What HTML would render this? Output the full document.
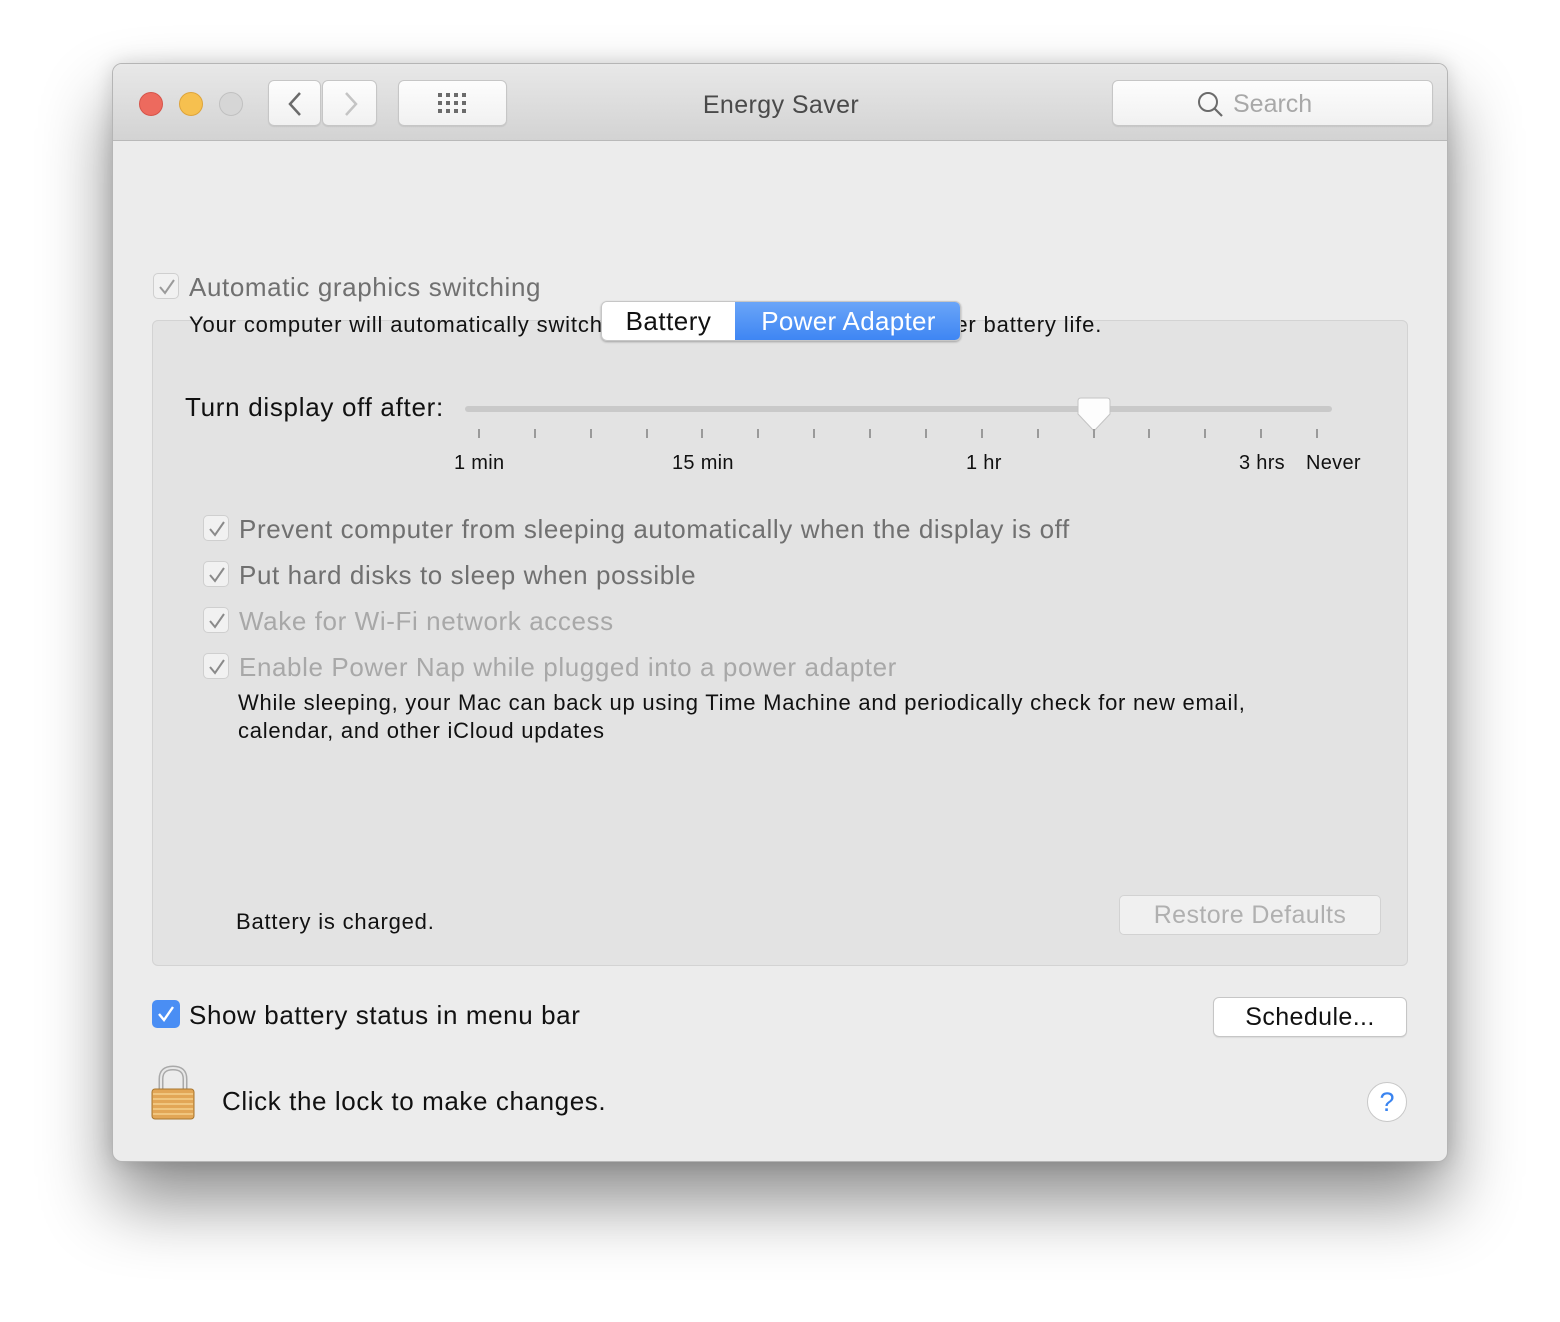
<!DOCTYPE html>
<html><head><meta charset="utf-8"><style>
*{margin:0;padding:0;box-sizing:border-box}
body{width:1560px;height:1322px;background:#fff;font-family:"Liberation Sans",sans-serif;position:relative;overflow:hidden}
.a{position:absolute}
#win{left:112px;top:63px;width:1336px;height:1099px;background:#ececec;border-radius:10px;border:1px solid #b5b5b5;box-shadow:0 40px 70px rgba(0,0,0,0.45),0 0 20px rgba(0,0,0,0.15);overflow:hidden}
#tb{left:0;top:0;width:1336px;height:77px;background:linear-gradient(#e8e8e8,#d3d3d3);border-bottom:1px solid #b9b9b9}
.dot{width:24px;height:24px;border-radius:50%;top:28px}
.btn{background:linear-gradient(#fdfdfd,#f1f1f1);border:1px solid #c6c6c6;border-radius:6px;box-shadow:0 1px 1px rgba(0,0,0,.08)}
.cb{width:26px;height:26px;border:1px solid #cfcfcf;border-radius:5px;background:#f1f1f1}
.cb svg{position:absolute;left:4px;top:4px}
.t{font-size:26px;white-space:nowrap;letter-spacing:0.6px}
.g1{color:#707070}.g2{color:#a8a8a8}
.tick{width:2px;height:9px;background:#9a9a9a;top:429px}
.lbl{font-size:20px;color:#111;top:452px;letter-spacing:0.3px}
</style></head><body>
<div id="win" class="a">
<div id="tb" class="a">
 <div class="a dot" style="left:26px;background:#ed6a5e;border:1px solid #d6544a"></div>
 <div class="a dot" style="left:66px;background:#f6c04f;border:1px solid #dea43a"></div>
 <div class="a dot" style="left:106px;background:#d6d6d6;border:1px solid #c0c0c0"></div>
 <div class="a btn" style="left:155px;top:16px;width:53px;height:46px"><svg class="a" style="left:16px;top:10px" width="20" height="26"><path d="M15 2 L5 13 L15 24" stroke="#6b6b6b" stroke-width="2.5" fill="none"/></svg></div>
 <div class="a btn" style="left:209px;top:16px;width:55px;height:46px"><svg class="a" style="left:18px;top:10px" width="20" height="26"><path d="M5 2 L15 13 L5 24" stroke="#c4c4c4" stroke-width="2.5" fill="none"/></svg></div>
 <div class="a btn" style="left:285px;top:16px;width:109px;height:46px"><svg class="a" style="left:39px;top:12px" width="32" height="22" fill="#6b6b6b"><rect x="0" y="0" width="4" height="4"/><rect x="8" y="0" width="4" height="4"/><rect x="16" y="0" width="4" height="4"/><rect x="24" y="0" width="4" height="4"/><rect x="0" y="8" width="4" height="4"/><rect x="8" y="8" width="4" height="4"/><rect x="16" y="8" width="4" height="4"/><rect x="24" y="8" width="4" height="4"/><rect x="0" y="16" width="4" height="4"/><rect x="8" y="16" width="4" height="4"/><rect x="16" y="16" width="4" height="4"/><rect x="24" y="16" width="4" height="4"/></svg></div>
 <div class="a" style="left:0;width:1336px;top:27px;text-align:center;font-size:25px;color:#4a4a4a;letter-spacing:0.4px">Energy Saver</div>
 <div class="a btn" style="left:999px;top:16px;width:321px;height:46px;border-radius:6px"><svg class="a" style="left:84px;top:10px" width="28" height="28"><circle cx="11" cy="11" r="9" stroke="#6b6b6b" stroke-width="2" fill="none"/><path d="M17.5 17.5 L25 25" stroke="#6b6b6b" stroke-width="2.2"/></svg><div class="a" style="left:120px;top:9px;font-size:25px;color:#a8a8a8">Search</div></div>
</div>
</div>
<div class="a cb" style="left:153px;top:273px"><svg width="18" height="18"><path d="M2 9 L7 15 L16 2" stroke="#9a9a9a" stroke-width="2" fill="none"/></svg></div>
<div class="a t g1" style="left:189px;top:272px">Automatic graphics switching</div>
<div class="a" style="left:152px;top:320px;width:1256px;height:646px;background:#e3e3e3;border:1px solid #d3d3d3;border-radius:6px"></div>
<div class="a" style="left:189px;top:312px;font-size:22px;color:#111;letter-spacing:0.85px;white-space:nowrap">Your computer will automatically switch between graphics modes for better battery life.</div>
<div class="a" style="left:601px;top:301px;width:360px;height:40px;border-radius:6px;box-shadow:0 1px 2px rgba(0,0,0,.3);overflow:hidden;border:1px solid #c6c6c6">
 <div class="a" style="left:0;top:0;width:133px;height:40px;background:#fff;text-align:center;font-size:26px;line-height:38px;color:#111;letter-spacing:0.5px">Battery</div>
 <div class="a" style="left:133px;top:0;width:227px;height:40px;background:linear-gradient(#6aa5f8,#3c84f3);text-align:center;font-size:26px;line-height:38px;color:#fff;letter-spacing:0.3px">Power Adapter</div>
</div>
<div class="a" style="left:185px;top:392px;font-size:26px;color:#111;letter-spacing:0.7px">Turn display off after:</div>
<div class="a" style="left:465px;top:406px;width:867px;height:6px;border-radius:3px;background:#c9c9c9"></div>
<svg class="a" style="left:1077px;top:397px" width="34" height="38"><path d="M4 1 H30 Q33 1 33 4 V17 L17 34 L1 17 V4 Q1 1 4 1Z" fill="#fdfdfd" stroke="#c4c4c4"/></svg>
<div class="a tick" style="left:478px"></div><div class="a tick" style="left:534px"></div><div class="a tick" style="left:590px"></div><div class="a tick" style="left:646px"></div><div class="a tick" style="left:701px"></div><div class="a tick" style="left:757px"></div><div class="a tick" style="left:813px"></div><div class="a tick" style="left:869px"></div><div class="a tick" style="left:925px"></div><div class="a tick" style="left:981px"></div><div class="a tick" style="left:1037px"></div><div class="a tick" style="left:1093px"></div><div class="a tick" style="left:1148px"></div><div class="a tick" style="left:1204px"></div><div class="a tick" style="left:1260px"></div><div class="a tick" style="left:1316px"></div>
<div class="a lbl" style="left:454px">1 min</div><div class="a lbl" style="left:672px">15 min</div><div class="a lbl" style="left:966px">1 hr</div><div class="a lbl" style="left:1239px">3 hrs</div><div class="a lbl" style="left:1306px">Never</div>
<div class="a cb" style="left:203px;top:515px"><svg width="18" height="18"><path d="M2 9 L7 15 L16 2" stroke="#8a8a8a" stroke-width="2" fill="none"/></svg></div>
<div class="a t g1" style="left:239px;top:514px">Prevent computer from sleeping automatically when the display is off</div>
<div class="a cb" style="left:203px;top:561px"><svg width="18" height="18"><path d="M2 9 L7 15 L16 2" stroke="#8a8a8a" stroke-width="2" fill="none"/></svg></div>
<div class="a t g1" style="left:239px;top:560px">Put hard disks to sleep when possible</div>
<div class="a cb" style="left:203px;top:607px"><svg width="18" height="18"><path d="M2 9 L7 15 L16 2" stroke="#8a8a8a" stroke-width="2" fill="none"/></svg></div>
<div class="a t g2" style="left:239px;top:606px">Wake for Wi-Fi network access</div>
<div class="a cb" style="left:203px;top:653px"><svg width="18" height="18"><path d="M2 9 L7 15 L16 2" stroke="#8a8a8a" stroke-width="2" fill="none"/></svg></div>
<div class="a t g2" style="left:239px;top:652px">Enable Power Nap while plugged into a power adapter</div>
<div class="a" style="left:238px;top:689px;font-size:22px;line-height:28px;color:#111;letter-spacing:0.75px;white-space:nowrap">While sleeping, your Mac can back up using Time Machine and periodically check for new email,<br>calendar, and other iCloud updates</div>
<div class="a" style="left:236px;top:909px;font-size:22px;color:#111;letter-spacing:0.8px">Battery is charged.</div>
<div class="a" style="left:1119px;top:895px;width:262px;height:40px;border:1px solid #d2d2d2;border-radius:5px;background:#f0f0f0;text-align:center;font-size:25px;line-height:38px;color:#b0b0b0;letter-spacing:0.4px">Restore Defaults</div>
<div class="a" style="left:152px;top:1000px;width:28px;height:28px;border-radius:5px;background:#4a8ef4"><svg class="a" style="left:5px;top:5px" width="18" height="18"><path d="M2 9 L7 15 L16 2" stroke="#fff" stroke-width="2.4" fill="none"/></svg></div>
<div class="a t" style="left:189px;top:1000px;color:#111">Show battery status in menu bar</div>
<div class="a btn" style="left:1213px;top:997px;width:194px;height:40px;background:#fff;text-align:center;font-size:25px;line-height:38px;color:#111;letter-spacing:0.4px">Schedule...</div>
<svg class="a" style="left:150px;top:1065px" width="46" height="56"><path d="M11 26 V14 Q11 3 23 3 Q35 3 35 14 V26" stroke="#a9a9a9" stroke-width="5" fill="none"/><path d="M11 26 V14 Q11 3 23 3 Q35 3 35 14 V26" stroke="#e8e8e8" stroke-width="2" fill="none"/><rect x="2" y="24" width="42" height="30" rx="3" fill="#e2a656" stroke="#a8762e"/><g stroke="#f5cf8c" stroke-width="1.5"><path d="M3 29H43M3 34H43M3 39H43M3 44H43M3 49H43"/></g></svg>
<div class="a t" style="left:222px;top:1086px;color:#111">Click the lock to make changes.</div>
<div class="a" style="left:1367px;top:1082px;width:40px;height:40px;border-radius:50%;background:#fff;border:1px solid #c8c8c8;text-align:center;font-size:27px;line-height:38px;color:#3a84f0">?</div>
</body></html>
